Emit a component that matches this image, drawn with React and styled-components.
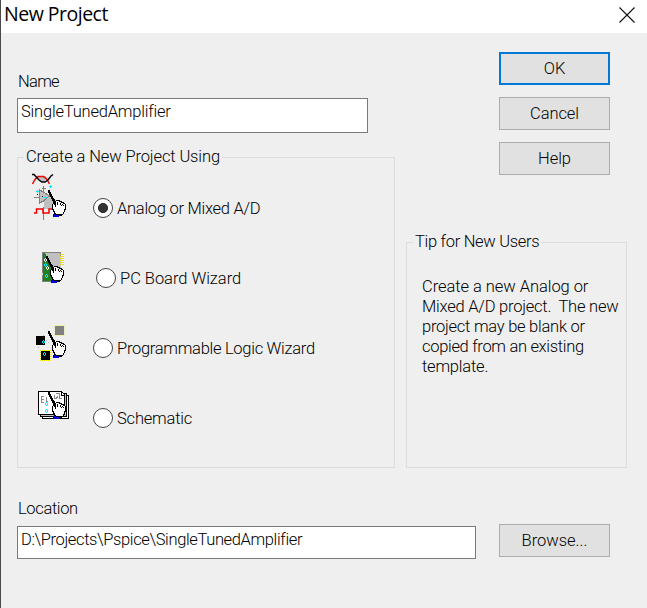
import React, { useState } from "react";
import styled, { createGlobalStyle } from "styled-components";

const GlobalStyle = createGlobalStyle`
  * {
    box-sizing: border-box;
  }

  body {
    margin: 0;
    background: #efefef;
  }
`;

const Dialog = styled.div`
  width: 647px;
  height: 608px;
  display: flex;
  flex-direction: column;
  background: #efefef;
  border-left: 1px solid #4a4a4a;
  color: #000;
  font-family: Roboto, "Liberation Sans", sans-serif;
  font-weight: 300;
  font-size: 16.5px;
  line-height: 20px;
  overflow: hidden;
`;

const TitleBar = styled.header`
  height: 33px;
  display: flex;
  align-items: flex-start;
  justify-content: space-between;
  padding: 0 12px 0 3px;
  background: white;
`;

const Title = styled.h1`
  margin: 0;
  font-family: "Open Sans", "Noto Sans", sans-serif;
  font-size: 19.5px;
  font-weight: 400;
  line-height: 28px;
  letter-spacing: -0.5px;
`;

const CloseButton = styled.button`
  width: 16px;
  height: 16px;
  margin-top: 7px;
  padding: 0;
  border: none;
  background: none;

  svg {
    display: block;
  }
`;

const Body = styled.main`
  flex: 1;
  display: flex;
  flex-direction: column;
  padding: 19px 20px 0 16px;
`;

const Columns = styled.div`
  display: flex;
  justify-content: space-between;
  height: 416px;
`;

const Main = styled.section`
  width: 378px;
  display: flex;
  flex-direction: column;
  padding-top: 20px;
`;

const Side = styled.section`
  width: 221px;
  display: flex;
  flex-direction: column;
  justify-content: space-between;
`;

const Buttons = styled.div`
  display: flex;
  flex-direction: column;
  gap: 12px;
  padding-left: 93px;
`;

const Button = styled.button`
  width: 111px;
  height: 33px;
  padding: 0;
  border: ${(props) => (props.$primary ? "2px solid #0078d7" : "1px solid #adadad")};
  background: #e1e1e1;
  color: #000;
  font: inherit;
`;

const Text = styled.span`
  white-space: pre;
  letter-spacing: ${(props) => props.$track || 0}px;
`;

const Label = styled.label`
  height: 20px;
  padding-left: 1px;
`;

const Field = styled.div`
  width: ${(props) => props.$width}px;
  height: ${(props) => props.$height}px;
  padding: 3px 3px 0;
  border: 1px solid #7a7a7a;
  background: white;
`;

const Group = styled.fieldset`
  width: 100%;
  height: ${(props) => props.$height}px;
  margin: 0;
  padding: 0;
  border: 1px solid #dcdcdc;

  legend {
    height: 20px;
    margin-left: 6px;
    padding: 0 2px;
  }
`;

const NameField = styled(Field)`
  margin: 6px 0 14px;
`;

const Options = styled.div`
  display: flex;
  flex-direction: column;
  padding: 3px 0 0 12px;
`;

const Option = styled.div`
  height: 70px;
  display: flex;
  align-items: flex-start;

  > svg {
    flex: none;
  }
`;

const OptionLabel = styled.label`
  display: flex;
  align-items: flex-start;
  gap: 4px;
  margin: 28px 0 0 ${(props) => props.$indent || 23}px;

  ${Text} {
    margin-top: 1px;
  }
`;

const Radio = styled.input`
  appearance: none;
  width: 20px;
  height: 20px;
  margin: 0;
  border: 1px solid #444;
  border-radius: 50%;
  background: white;

  &:checked {
    background: radial-gradient(circle, #333 4.7px, white 5.3px);
  }
`;

const Tip = styled.p`
  margin: 25px 0 0 15px;
`;

const Location = styled.div`
  display: flex;
  align-items: flex-start;
  gap: 23px;
  margin-top: 5px;

  ${Field} {
    margin-top: 2px;
  }
`;

const LocationLabel = styled(Label)`
  margin-top: 31px;
`;

// # black, . white, b blue, c cyan
const colors = { "#": "#000", ".": "#fff", b: "#0000e0", c: "#00f0ff", w: "#fff" };

const hand = [
  "##",
  "##",
  "###",
  " ##",
  " ###",
  "  ##",
  "  ###",
  "   ##",
  "   ###",
  "    ###",
  "    ### ####",
  "     ###...###",
  "     ###.#...###",
  "     ###.#..#..##",
  "    #.##.#..#.#..#",
  "    #..#.....#.#.#",
  "    #..#.........#",
  "    #............#",
  "    #............#",
  "    ##..........##",
  "     #..........#",
  "     ##.........#",
  "      #........#",
  "      ##.......#",
  "     bb########",
  "     bbbbbb###",
  "     bbbbbb",
];

const spark = [" c", "c c", "c c", " c"];
const whiteSpark = [" w", "w w", "w w", " w"];
const plus = [" c", "ccc", " c"];

const Pixels = ({ rows, x, y }) =>
  rows.map((row, j) =>
    [...row].map((ch, i) =>
      ch === " " ? null : (
        <rect key={`${i}-${j}`} x={x + i} y={y + j} width="1" height="1" fill={colors[ch]} />
      )
    )
  );

const Icon = ({ children }) => (
  <svg width="40" height="52" viewBox="0 0 40 52" fill="none" shapeRendering="crispEdges">
    {children}
  </svg>
);

const AnalogIcon = () => (
  <Icon>
    <path d="M6 8 8 6h7l2 2-2 3-3 1-3-2Z" fill="#c0c0c0" />
    <path
      d="M2.5 14 5 9.5 8 6.5h5.5L17 9.5 19.5 14"
      stroke="#f00000"
      strokeWidth="1.5"
      shapeRendering="auto"
    />
    <path
      d="M2 4.5h2L9 10l3 2h3l3-2 3-4 2-1.5"
      stroke="#000"
      strokeWidth="1.4"
      shapeRendering="auto"
    />
    <path d="M14 26h7l6 5v8H14Z" fill="#c0c0c0" />
    <path d="M9.5 20v13l4-2 6-5-6-4Z" fill="#c0c0c0" stroke="#808080" />
    <path d="M13.5 16v6M12 18.5h4M4 27.5h5M13.5 37v13" stroke="#808080" />
    <path d="M4 43h2.5v-4h6.5v4h6v-4h5" stroke="#f00000" strokeWidth="1.5" shapeRendering="auto" />
    <path d="M7 24h1v1H7ZM12 26h1v1h-1Z" fill="#000" />
    <Pixels rows={plus} x={6} y={20} />
    <Pixels rows={plus} x={19} y={15} />
    <Pixels rows={plus} x={14} y={26} />
    <Pixels rows={hand} x={18} y={20} />
  </Icon>
);

const BoardIcon = () => (
  <Icon>
    <path d="M12 12h19v24H12Z" fill="#c0c0c0" />
    <path d="M12.5 41V12.5h18v4" stroke="#808080" />
    <path d="M13 13h2l5 10 5 7v11H13Z" fill="#208020" />
    <path d="M12 41.5h11" stroke="#808080" />
    <path
      d="M30 14.5h4M30 16.5h4M30 18.5h4M30 20.5h4M30 22.5h4M30 24.5h4"
      stroke="#e8e020"
    />
    <Pixels rows={whiteSpark} x={14} y={18} />
    <Pixels rows={spark} x={14} y={23} />
    <Pixels rows={whiteSpark} x={16} y={26} />
    <Pixels rows={spark} x={15} y={34} />
    <path d="M11 33h2v2h-2ZM10 39h1v1h-1Z" fill="#ddd" />
    <Pixels rows={hand} x={16} y={16} />
  </Icon>
);

const LogicIcon = () => (
  <Icon>
    <path d="M25 16h9v9h-9Z" fill="#808080" />
    <path
      d="M24.5 15.5h10v10h-10Z"
      stroke="#e8e8a0"
      strokeDasharray="1 1"
      strokeDashoffset="0.5"
    />
    <path d="M6 26h9v9H6Z" fill="#000" />
    <path d="M11 41h9v9h-9Z" fill="#000" />
    <path
      d="M10.5 40.5h10v10h-10Z"
      stroke="#e8e800"
      strokeDasharray="1 1"
      strokeDashoffset="0.5"
    />
    <path d="M13 25h1v1h-1ZM16 30h1v1h-1ZM8 37h1v1H8ZM18 32h1v1h-1Z" fill="#b0b0b0" />
    <Pixels rows={spark} x={12} y={30} />
    <Pixels rows={spark} x={13} y={42} />
    <Pixels rows={hand} x={18} y={21} />
  </Icon>
);

const SchematicIcon = () => (
  <Icon>
    <path d="M12.5 15.5h26v23h-26Z" fill="#fff" stroke="#000" />
    <path d="M10.5 13.5h26v23h-26Z" fill="#c0c0c0" stroke="#000" />
    <path d="M8.5 11.5h23l3 3v20h-26Z" fill="#fff" stroke="#000" />
    <path d="M31.5 11v4h3" stroke="#000" />
    <path
      d="M14 16.5h-3v3h3M11 19.5v3h3M16 16.5v5h2M24 14.5v4h2l2-2M26 13.5h3v4M29 18.5h3"
      stroke="#888"
    />
    <Pixels rows={spark} x={15} y={22} />
    <Pixels rows={spark} x={15} y={29} />
    <Pixels rows={hand} x={18} y={12} />
  </Icon>
);

const options = [
  { name: "Analog or Mixed A/D", icon: AnalogIcon, track: -0.27 },
  { name: "PC Board Wizard", icon: BoardIcon, indent: 26, track: -0.03 },
  { name: "Programmable Logic Wizard", icon: LogicIcon, track: -0.28 },
  { name: "Schematic", icon: SchematicIcon, track: -0.2 },
];

const tip = [
  { text: "Create a new Analog or", track: -0.05 },
  { text: "Mixed A/D project.  The new", track: -0.22 },
  { text: "project may be blank or", track: -0.25 },
  { text: "copied from an existing", track: -0.31 },
  { text: "template.", track: -0.2 },
];

const App = () => {
  const [selected, setSelected] = useState("Analog or Mixed A/D");

  return (
    <Dialog>
      <GlobalStyle />
      <TitleBar>
        <Title>New Project</Title>
        <CloseButton aria-label="Close">
          <svg width="16" height="16" viewBox="0 0 16 16">
            <path d="M.5.5l15 15M15.5.5l-15 15" stroke="#111" strokeWidth="1.1" />
          </svg>
        </CloseButton>
      </TitleBar>

      <Body>
        <Columns>
          <Main>
            <Label>
              <Text $track={-0.7}>Name</Text>
            </Label>
            <NameField $width={351} $height={35}>
              <Text $track={-0.2}>SingleTunedAmplifier</Text>
            </NameField>
            <Group $height={321}>
              <legend>
                <Text $track={-0.12}>Create a New Project Using</Text>
              </legend>
              <Options>
                {options.map(({ name, icon: OptionIcon, indent, track }) => (
                  <Option key={name}>
                    <OptionIcon />
                    <OptionLabel $indent={indent}>
                      <Radio
                        type="radio"
                        name="kind"
                        checked={selected === name}
                        onChange={() => setSelected(name)}
                      />
                      <Text $track={track}>{name}</Text>
                    </OptionLabel>
                  </Option>
                ))}
              </Options>
            </Group>
          </Main>

          <Side>
            <Buttons>
              <Button $primary>
                <Text>OK</Text>
              </Button>
              <Button>
                <Text $track={-0.1}>Cancel</Text>
              </Button>
              <Button>
                <Text>Help</Text>
              </Button>
            </Buttons>
            <Group $height={236}>
              <legend>
                <Text $track={-0.3}>Tip for New Users</Text>
              </legend>
              <Tip>
                {tip.map(({ text, track }) => (
                  <React.Fragment key={text}>
                    <Text $track={track}>{text}</Text>
                    <br />
                  </React.Fragment>
                ))}
              </Tip>
            </Group>
          </Side>
        </Columns>

        <LocationLabel>
          <Text $track={-0.35}>Location</Text>
        </LocationLabel>
        <Location>
          <Field $width={459} $height={33}>
            <Text $track={-0.36}>D:\Projects\Pspice\SingleTunedAmplifier</Text>
          </Field>
          <Button>
            <Text>Browse...</Text>
          </Button>
        </Location>
      </Body>
    </Dialog>
  );
};

export default App;
